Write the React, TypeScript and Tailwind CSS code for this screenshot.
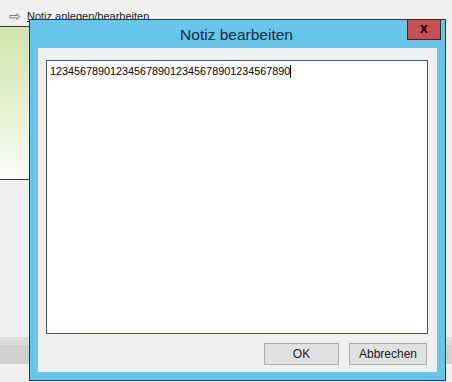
import React from "react";

export default function App() {
  const text = "1234567890123456789012345678901234567890";

  return (
    <main
      className="relative w-[452px] h-[382px] overflow-hidden bg-[#f0f0f0]"
      style={{ fontFamily: '"Liberation Sans", Arial, sans-serif' }}
    >
      {/* background window */}
      <div className="flex flex-col">
        <div className="h-[26px] flex items-start pl-[9px] pt-[9px] text-[11px] leading-[14px] text-[#1a1a1a]">
          <span className="w-[18px] text-[14px] leading-[14px] text-[#666]">⇨</span>
          <span className="underline">Notiz anlegen/bearbeiten</span>
        </div>
        <div className="w-[200px] h-px bg-[#3a3a3a]" />
        <div className="w-[200px] h-[152px] bg-gradient-to-b from-[#cfe5a9] via-[#e4f0cf] to-[#fbfdf7]" />
        <div className="w-[200px] h-px bg-[#3a3a3a]" />
        <div className="h-[157px]" />
        <div className="h-[8px] bg-[#dcdcdc]" />
        <div className="h-[19px] bg-[#cfcfcf]" />
      </div>

      {/* dialog */}
      <div className="absolute left-[29px] top-[19px] w-[417px] h-[362px] border border-[#23374a] bg-[#65c6e9] flex flex-col">
        <div className="relative h-[28px] flex items-center justify-center">
          <span className="text-[15.5px] text-[#1b2b38] pt-[1px] -ml-[2px]">Notiz bearbeiten</span>
          <div className="absolute right-[4px] -top-px w-[34px] h-[21px] bg-[#c75050] border border-[#3a2a2a] flex items-center justify-center">
            <span className="text-[14px] font-bold leading-none text-black -mt-[3px]">x</span>
          </div>
        </div>
        <div className="flex-1 mx-[8px] mb-[8px] bg-[#f0f0f0] flex flex-col pt-[12px] pl-[8px] pr-[9px]">
          <div className="h-[274px] border border-[#3f5a75] bg-white px-[3px] pt-[4px]">
            <div className="flex items-center text-[10.8px] leading-[13px] text-black">
              <span>{text}</span>
              <span className="w-px h-[13px] bg-black" />
            </div>
          </div>
          <div className="flex justify-end gap-[10px] mt-[9px] pr-px">
            <button className="w-[75px] h-[22px] bg-[#e1e1e1] border border-[#adadad] text-[12px] text-[#1a1a1a]">
              OK
            </button>
            <button className="w-[78px] h-[22px] bg-[#e1e1e1] border border-[#adadad] text-[12px] text-[#1a1a1a]">
              Abbrechen
            </button>
          </div>
        </div>
      </div>
    </main>
  );
}
